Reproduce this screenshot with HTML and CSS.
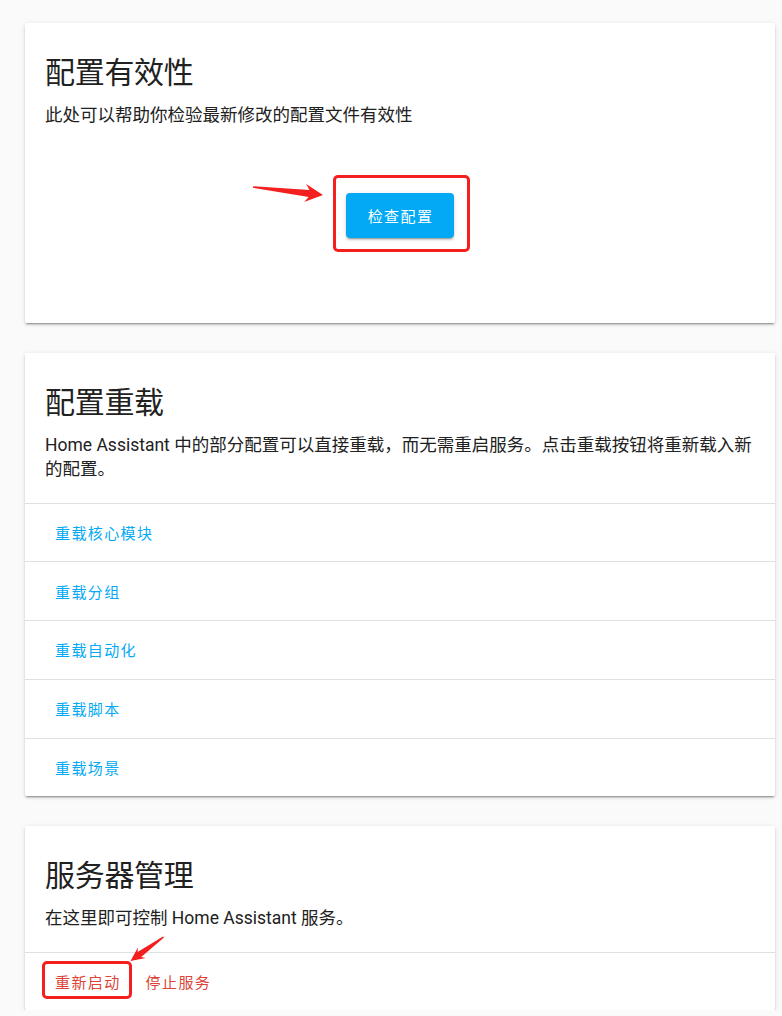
FILE: index.html
```html
<!DOCTYPE html>
<html lang="zh-CN">
<head>
    <meta charset="UTF-8">
    <meta name="viewport" content="width=device-width, initial-scale=1.0">
    <title>服务器控制 - Home Assistant</title>
    <link rel="stylesheet" href="styles.css">
</head>
<body>
    <div class="page">
        <!-- 配置有效性 -->
        <div class="card">
            <div class="card-content">
                <div class="card-title">配置有效性</div>
                <div class="card-desc">此处可以帮助你检验最新修改的配置文件有效性</div>
            </div>
            <div class="validate-row">
                <div class="marked">
                    <button class="raised-btn">检查配置</button>
                    <div class="mark-box mark-box-check"></div>
                    <svg class="mark-arrow mark-arrow-check" width="76" height="28" viewBox="0 0 76 28">
                        <polygon points="3.1,8.2 59.5,11.9 56.1,6.1 73,17 54.1,23.9 58.7,18.9 2.9,9.8" />
                    </svg>
                </div>
            </div>
        </div>

        <!-- 配置重载 -->
        <div class="card">
            <div class="card-content">
                <div class="card-title">配置重载</div>
                <div class="card-desc">Home Assistant 中的部分配置可以直接重载，而无需重启服务。点击重载按钮将重新载入新的配置。</div>
            </div>
            <div class="reload-list">
                <div class="reload-item"><span class="text-btn">重载核心模块</span></div>
                <div class="reload-item"><span class="text-btn">重载分组</span></div>
                <div class="reload-item"><span class="text-btn">重载自动化</span></div>
                <div class="reload-item"><span class="text-btn">重载脚本</span></div>
                <div class="reload-item"><span class="text-btn">重载场景</span></div>
            </div>
        </div>

        <!-- 服务器管理 -->
        <div class="card">
            <div class="card-content">
                <div class="card-title">服务器管理</div>
                <div class="card-desc">在这里即可控制 Home Assistant 服务。</div>
            </div>
            <div class="card-actions">
                <div class="marked">
                    <span class="text-btn warning">重新启动</span>
                    <div class="mark-box mark-box-restart"></div>
                    <svg class="mark-arrow mark-arrow-restart" width="40" height="32" viewBox="0 0 40 32">
                        <polygon points="36,3.4 10.6,19.1 10.9,14.5 3.5,28 18.7,25.1 14.2,23.9 37,4.6" />
                    </svg>
                </div>
                <span class="text-btn warning">停止服务</span>
            </div>
        </div>
    </div>
</body>
</html>
```

FILE: styles.css
```css
* {
    margin: 0;
    padding: 0;
    box-sizing: border-box;
}

body {
    font-family: Roboto, "Noto Sans CJK SC", sans-serif;
    background-color: #fafafa;
    color: #212121;
}

.page {
    width: 750px;
    margin-left: 25px;
    padding-top: 23px;
    display: flex;
    flex-direction: column;
    gap: 30px;
}

.card {
    background: white;
    border-radius: 2px;
    box-shadow: 0 2px 2px rgba(0, 0, 0, 0.14),
                0 1px 5px rgba(0, 0, 0, 0.12),
                0 3px 1px -2px rgba(0, 0, 0, 0.2);
}

.card-content {
    padding: 26px 20px 21px;
}

.card-title {
    font-size: 30px;
    line-height: 48px;
    font-weight: 400;
    letter-spacing: -0.01em;
}

.card-desc {
    margin-top: 6px;
    font-size: 17.5px;
    line-height: 24.5px;
}

.validate-row {
    display: flex;
    justify-content: center;
    padding: 44px 0 85px;
}

.raised-btn {
    font-family: inherit;
    background: #03a9f4;
    color: white;
    border: none;
    border-radius: 4px;
    height: 45px;
    padding: 0 21px 0 22px;
    font-size: 15px;
    letter-spacing: 1.4px;
    cursor: pointer;
    box-shadow: 0 3px 1px -2px rgba(0, 0, 0, 0.2),
                0 2px 2px rgba(0, 0, 0, 0.14),
                0 1px 5px rgba(0, 0, 0, 0.12);
}

.reload-item {
    border-top: 1px solid #e0e0e0;
    height: 58.8px;
    display: flex;
    align-items: center;
    padding-left: 30px;
}

.text-btn {
    font-size: 15px;
    letter-spacing: 1.4px;
    color: #03a9f4;
    cursor: pointer;
}

.card-actions {
    border-top: 1px solid #e0e0e0;
    height: 58px;
    display: flex;
    align-items: center;
    gap: 9px;
    padding: 0 22px;
}

.card-actions .text-btn {
    display: flex;
    align-items: center;
    height: 36px;
    padding: 0 8px;
}

.text-btn.warning {
    color: #db4437;
}

/* red annotation marks drawn over the screenshot */
.marked {
    position: relative;
}

.mark-box {
    position: absolute;
    border: 3px solid #f41f1f;
    border-radius: 5px;
    pointer-events: none;
}

.mark-box-check {
    left: -13px;
    top: -18px;
    width: 137px;
    height: 77px;
}

.mark-box-restart {
    left: -5px;
    top: -2px;
    width: 90px;
    height: 38px;
}

.mark-arrow {
    position: absolute;
    fill: #f41f1f;
    overflow: visible;
}

.mark-arrow-check {
    left: -96px;
    top: -15px;
}

.mark-arrow-restart {
    left: 80px;
    top: -30px;
}
```
